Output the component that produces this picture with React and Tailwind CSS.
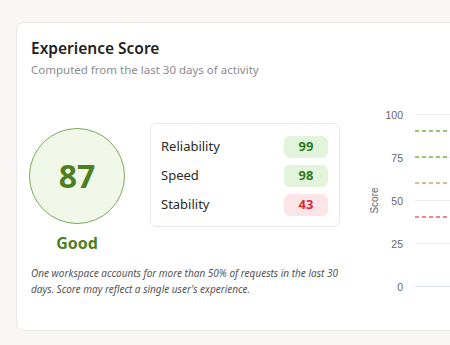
export default function App() {
  const metrics = [
    { label: "Reliability", value: 99, good: true },
    { label: "Speed", value: 98, good: true },
    { label: "Stability", value: 43, good: false },
  ];
  const ticks = [100, 75, 50, 25, 0];
  const y = (v) => Math.round(9 + ((100 - v) / 25) * 43) + 0.5;
  const thresholds = [
    { v: 90, color: "#93c67a" },
    { v: 75, color: "#93c67a" },
    { v: 60, color: "#dbbb92" },
    { v: 40, color: "#f08888" },
  ];

  return (
    <div className="h-[345px] w-[450px] overflow-hidden bg-[#f8f7f5] pl-4 pt-[22px] font-['Noto_Sans',sans-serif]">
      <div className="h-[309px] w-[520px] rounded-lg border border-[#ebe9e6] bg-white pl-[14px] pt-[13px]">
        <h2 className="text-[15.5px] font-semibold leading-6 text-[#1f1f1f]">Experience Score</h2>
        <p className="text-[11.5px] leading-5 text-[#8c8c8c]">Computed from the last 30 days of activity</p>

        <div className="mt-[25px] flex">
          <div className="w-[320px] flex-none pt-[18px]">
            <div className="flex items-start">
              <div className="-ml-[2px] flex w-[96px] flex-col items-center">
                <div className="mt-[5px] flex h-[96px] w-[96px] items-center justify-center rounded-full border border-[#7aab55] bg-[#f1f8e9]">
                  <span className="text-[32px] font-bold text-[#4d7f1f]">87</span>
                </div>
                <span className="mt-[7px] text-[16px] font-bold text-[#4d7f1f]">Good</span>
              </div>
              <div className="ml-[25px] flex h-[104px] w-[190px] flex-col justify-center gap-[7px] rounded-md border border-[#e8e8e8] bg-white pl-[10px] pr-[11px] pt-[2px]">
                {metrics.map((m) => (
                  <div key={m.label} className="flex items-center justify-between">
                    <span className="text-[13px] text-[#2a2a2a]">{m.label}</span>
                    <span
                      className={
                        m.good
                          ? "flex h-[22px] w-[44px] items-center justify-center rounded-md bg-[#e2f5dc] text-[13px] font-bold text-[#2f7d1f]"
                          : "flex h-[22px] w-[44px] items-center justify-center rounded-md bg-[#fde4e7] text-[13px] font-bold text-[#d42a3a]"
                      }
                    >
                      {m.value}
                    </span>
                  </div>
                ))}
              </div>
            </div>
            <p className="mt-[10px] w-[330px] text-[10px] italic leading-4 text-[#555]">
              One workspace accounts for more than 50% of requests in the last 30 days. Score may reflect a single user's experience.
            </p>
          </div>

          <svg width="120" height="200" className="ml-[7px] flex-none font-['Liberation_Sans',sans-serif]">
            <text x="16" y={y(50)} transform={`rotate(-90 16 ${y(50)})`} textAnchor="middle" dominantBaseline="central" fontSize="10" fill="#666">Score</text>
            {ticks.map((t) => (
              <g key={t}>
                <text x="45" y={y(t)} textAnchor="end" dominantBaseline="central" fontSize="10.5" fill="#666">{t}</text>
                <line x1="57" x2="120" y1={y(t)} y2={y(t)} stroke={t === 0 ? "#d8dcf0" : "#ececec"} strokeWidth="1" />
              </g>
            ))}
            {thresholds.map((th) => (
              <line
                key={th.v}
                x1="57"
                x2="120"
                y1={y(th.v) - 0.5}
                y2={y(th.v) - 0.5}
                stroke={th.color}
                strokeWidth="2"
                strokeDasharray="4 3"
              />
            ))}
          </svg>
        </div>
      </div>
    </div>
  );
}
